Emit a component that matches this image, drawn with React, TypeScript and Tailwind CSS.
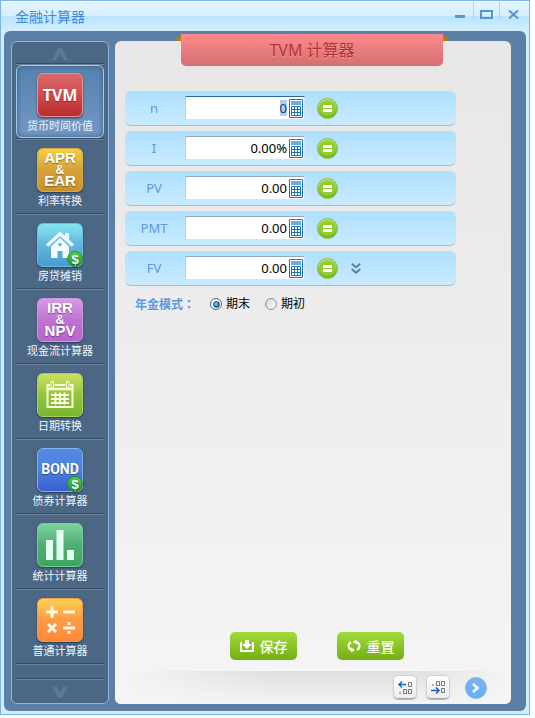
import { useEffect, useRef, useState, type ReactNode } from "react";

function CoinBadge() {
  return (
    <span className="absolute -right-px -bottom-px flex h-4 w-4 items-center justify-center rounded-full border border-[#259a2a] bg-linear-to-b from-[#59c94a] to-[#17941d] font-['Liberation_Sans',sans-serif] text-[13px] leading-none font-bold text-white">
      $
    </span>
  );
}

function HouseIcon() {
  return (
    <svg width="30" height="30" viewBox="0 0 30 30" fill="#f1fbff">
      <path d="M1 14.500 15 1.500l5 4.600V3h4v6.800l5 4.700-2.200 2.200L15 6 3.200 16.700z" />
      <path d="M15 8 6 16.500V28h6.500v-7h5v7H24V16.500zM13.500 13h3v3h-3z" fillRule="evenodd" />
    </svg>
  );
}

function CalendarIcon() {
  return (
    <svg width="28" height="28" viewBox="0 0 28 28" fill="none" stroke="#fdfee0">
      <path d="M4 4H1.500v22h25V4H24M8.500 4h11" strokeWidth="2" />
      <path d="M1 8h26" strokeWidth="2.500" />
      <path d="M5 .5h2.500v6H5zM20.500.5H23v6h-2.500z" strokeWidth="1" />
      <path d="M5 14h18M5 18h18M5 22h18M9.500 11.500v12M14 11.500v12M18.500 11.500v12" strokeWidth="1.800" />
    </svg>
  );
}

function BarsIcon() {
  return (
    <svg width="28" height="32" viewBox="0 0 28 32" fill="#e4fff0">
      <path d="M0 11h7v20H0zM10.500 1h7v30h-7zM21 21h7v10h-7z" />
    </svg>
  );
}

function OperatorsIcon() {
  return (
    <svg width="32" height="32" viewBox="0 0 32 32" stroke="#fff7e6" strokeWidth="3" fill="none">
      <path d="M2 8h12M8 2v12M19 8h12M4 20l8 8M12 20l-8 8M19 24h12M25 18v3M25 27v3" />
    </svg>
  );
}

function StackedText({ top, bottom }: { top: string; bottom: string }) {
  return (
    <span className="flex flex-col pb-px text-[15px] leading-[12px] font-bold">
      <span>{top}</span>
      <span className="text-[13px] leading-[11px]">&amp;</span>
      <span>{bottom}</span>
    </span>
  );
}

interface Tool {
  name: string;
  tile: string;
  art: ReactNode;
  badge?: boolean;
}

const tools: Tool[] = [
  {
    name: "货币时间价值",
    tile: "border-[#ec9294] from-[#d8696b] via-[#cf4a4d] to-[#b92c30]",
    art: <span className="font-['Open_Sans',sans-serif] text-[16px] font-bold">TVM</span>,
  },
  {
    name: "利率转换",
    tile: "border-[#d9ab45] from-[#f5d13c] via-[#d7a03b] to-[#cc912a]",
    art: <StackedText top="APR" bottom="EAR" />,
  },
  {
    name: "房贷摊销",
    tile: "border-[#65bddf] from-[#83e6ef] via-[#63b6dd] to-[#459bd0]",
    art: <HouseIcon />,
    badge: true,
  },
  {
    name: "现金流计算器",
    tile: "border-[#cf9ae1] from-[#d69be6] via-[#be72d2] to-[#b866cb]",
    art: <StackedText top="IRR" bottom="NPV" />,
  },
  {
    name: "日期转换",
    tile: "border-[#a8ce55] from-[#cbe05f] via-[#92c63e] to-[#79b52f]",
    art: <CalendarIcon />,
  },
  {
    name: "债券计算器",
    tile: "border-[#82aff0] from-[#5589e2] via-[#4b80dd] to-[#3c5dce]",
    art: <span className="pb-[2px] font-['Roboto',sans-serif] text-[14px] font-bold">BOND</span>,
    badge: true,
  },
  {
    name: "统计计算器",
    tile: "border-[#79ce98] from-[#7cd59d] via-[#51ad75] to-[#3da560]",
    art: <BarsIcon />,
  },
  {
    name: "普通计算器",
    tile: "border-[#ed9a4c] from-[#ffd04e] via-[#ff9a45] to-[#ff8a38]",
    art: <OperatorsIcon />,
  },
];

function Sidebar() {
  const [active, setActive] = useState(0);
  return (
    <nav aria-label="计算器" className="flex w-[98px] shrink-0 flex-col rounded-md border border-[#8db5e5] bg-[#4b6784] px-1">
      <button aria-label="向上" className="flex h-[23px] items-center justify-center border-b border-[#6c8398] pt-[2px] shadow-[inset_0_-1px_0_#344b62]">
        <svg width="16" height="12" viewBox="0 0 16 12" fill="#5d7892">
          <path d="M0 12 6 0h4l6 12h-4L8 6l-4 6z" />
        </svg>
      </button>
      {tools.map((tool, i) => (
        <div key={tool.name} className="h-[75px] border-b border-[#6c8398] shadow-[inset_0_-1px_0_#344b62]">
          <button
            onClick={() => setActive(i)}
            className={
              "flex h-[73px] w-full flex-col items-center rounded-md border pt-[7px] " +
              (i === active
                ? "border-[#a5c9ed] bg-linear-to-b from-[#5681af] to-[#7398c3] shadow-[inset_0_0_5px_#365b84]"
                : "border-transparent")
            }
          >
            <span className={"relative flex h-11 w-[46px] shrink-0 items-center justify-center rounded-md border bg-linear-to-b text-center font-['Liberation_Sans',sans-serif] text-white shadow-[0_1px_2px_#273d55] text-shadow-[0_1px_1px_#0006] " + tool.tile}>
              {tool.art}
              {tool.badge && <CoinBadge />}
            </span>
            <span className="text-[11px] leading-[18px] whitespace-nowrap text-[#eef6ff]">{tool.name}</span>
          </button>
        </div>
      ))}
      <div className="h-[15px] border-b border-[#6c8398] shadow-[inset_0_-1px_0_#344b62]" />
      <button aria-label="向下" className="flex grow items-center justify-center">
        <svg width="16" height="12" viewBox="0 0 16 12" fill="#5d7892">
          <path d="M0 0 6 12h4l6-12h-4L8 6 4 0z" />
        </svg>
      </button>
    </nav>
  );
}

function KeypadIcon() {
  return (
    <svg width="14" height="19" viewBox="0 0 14 19">
      <path d="M.5.5h13v18H.5z" fill="#fff" stroke="#1c78bd" />
      <path d="M2 2h10v4H2z" fill="#69ade3" />
      <path d="M2.500 7.500h9v9h-9zM5.500 7.500v9M8.500 7.500v9M2 10.500h10M2 13.500h10" fill="none" stroke="#1c78bd" />
    </svg>
  );
}

function ValueRow({ id, value, selected, more }: { id: string; value: string; selected?: boolean; more?: boolean }) {
  const field = useRef<HTMLInputElement>(null);
  useEffect(() => {
    if (selected && field.current) {
      field.current.focus();
      field.current.select();
    }
  }, [selected]);
  return (
    <div className="flex h-[35px] items-center rounded-md border-b border-[#a9bccb] bg-linear-to-b from-[#ade0ff] to-[#caebff]">
      <label htmlFor={id} className="w-[60px] shrink-0 pt-[2px] pr-[2px] text-center text-[13px] text-[#5c98dc]">{id}</label>
      <div className={"flex h-6 w-[120px] shrink-0 items-center border border-r-[#d5e4ee] border-b-[#d5e4ee] border-l-[#b5cfe0] bg-white pr-px " + (selected ? "border-t-[#2f6a9e]" : "border-t-[#94aabb]")}>
        <input
          id={id}
          ref={field}
          defaultValue={value}
          className="w-full min-w-0 grow bg-transparent pr-[2px] text-right text-[13px] leading-4 text-black caret-transparent outline-none selection:bg-[#a8d1fb] selection:text-[#243a55]"
        />
        <button aria-label={id + " 键盘"} className="shrink-0"><KeypadIcon /></button>
      </div>
      <button
        aria-label={"计算 " + id}
        className="ml-3 flex h-[21px] w-[21px] shrink-0 items-center justify-center rounded-full border border-[#8cba47] bg-[#8fce2c] shadow-[inset_0_1px_1px_#d7f29a,inset_0_-2px_1px_#75b51b]"
      >
        <svg width="9" height="7" viewBox="0 0 9 7" fill="#fff">
          <path d="M0 0h9v3H0zM0 4h9v3H0z" />
        </svg>
      </button>
      {more && (
        <button aria-label="更多" className="ml-[13px]">
          <svg width="10" height="11" viewBox="0 0 10 11" fill="none" stroke="#527da9" strokeWidth="1.800">
            <path d="m.7.700 4.300 3.600L9.300.700M.7 6l4.300 3.700L9.300 6" />
          </svg>
        </button>
      )}
    </div>
  );
}

function Mode({ label, checked }: { label: string; checked?: boolean }) {
  return (
    <label className="flex items-center gap-1 text-[12px] text-black">
      <input
        type="radio"
        name="mode"
        defaultChecked={checked}
        className="flex h-3 w-3 appearance-none items-center justify-center rounded-full border border-[#8c8f92] bg-linear-to-br from-[#d2d4d6] to-white before:hidden before:h-[7px] before:w-[7px] before:rounded-full before:border before:border-[#174766] before:bg-[radial-gradient(circle_at_40%_40%,#8bdcf5,#1c7ba8_60%)] checked:border-[#4c6478] checked:from-white checked:before:block"
      />
      {label}
    </label>
  );
}

const actionClass =
  "flex h-7 w-[67px] items-center justify-center gap-[6px] rounded-[5px] bg-linear-to-b from-[#a0db39] to-[#74ae12] text-[14px] font-medium text-white";

const padClass =
  "flex h-6 w-6 items-center justify-center rounded-[5px] border border-[#d0d0d0] border-b-[#a6a6a6] bg-linear-to-b from-white to-[#ececec] shadow-[0_1px_1px_#8888]";

export default function App() {
  return (
    <div className="flex min-h-screen bg-white pr-[5px] pb-[3px] font-['Noto_Sans','Noto_Sans_CJK_SC',sans-serif]">
      <div className="flex grow flex-col border border-[#7db4e8] bg-[#d3eeff] px-[3px] pb-[3px]">
        <header className="-mx-[3px] flex h-[30px] shrink-0 items-start justify-between border-t border-white bg-[linear-gradient(#e4f4ff,#d5efff_50%,#b9e5ff_50%,#d3eeff)] pr-[3px] pl-[14px]">
          <h1 className="text-[14px] leading-[29px] text-[#4289da]">金融计算器</h1>
          <div className="flex h-[18px] text-[#5795cd]">
            <button aria-label="最小化" className="flex w-7 justify-center border-r border-[#b4d3ea] pt-[13px]">
              <svg width="10" height="3" viewBox="0 0 10 3" fill="currentColor"><path d="M0 0h10v3H0z" /></svg>
            </button>
            <button aria-label="最大化" className="flex w-[26px] justify-center border-r border-[#b4d3ea] pt-2">
              <svg width="13" height="9" viewBox="0 0 13 9" fill="none" stroke="currentColor" strokeWidth="2"><path d="M1 1h11v7H1z" /></svg>
            </button>
            <button aria-label="关闭" className="flex w-[26px] justify-center pt-2">
              <svg width="11" height="9" viewBox="0 0 11 9" fill="none" stroke="currentColor" strokeWidth="2"><path d="m1 .5 9 8M10 .5l-9 8" /></svg>
            </button>
          </div>
        </header>

        <div className="flex grow gap-[6px] rounded-md bg-[#5c7fa6] pt-[10px] pr-[15px] pb-[7px] pl-[7px]">
          <Sidebar />
          <main className="relative flex grow flex-col rounded-md bg-linear-to-b from-[#e8e6e7] to-[#f5f5f5]">
            <div className="absolute -top-[7px] right-[62px] left-[60px] flex">
              <svg className="shrink-0" width="6" height="7" viewBox="0 0 6 7" fill="#b47e12"><path d="M6 0v7H0z" /></svg>
              <h2 className="h-8 grow rounded-b-[5px] bg-linear-to-b from-[#ff8b8c] to-[#d46f71] text-center text-[16px] leading-8 text-[#b63134] text-shadow-[0_1px_0_#ef9b9c]">
                TVM 计算器
              </h2>
              <svg className="shrink-0" width="6" height="7" viewBox="0 0 6 7" fill="#b47e12"><path d="M0 0v7h6z" /></svg>
            </div>

            <form className="flex grow flex-col pt-[50px]" onSubmit={(e) => e.preventDefault()}>
              <div className="mr-[55px] ml-[10px] flex flex-col gap-[5px]">
                <ValueRow id="n" value="0" selected />
                <ValueRow id="I" value="0.00%" />
                <ValueRow id="PV" value="0.00" />
                <ValueRow id="PMT" value="0.00" />
                <ValueRow id="FV" value="0.00" more />
              </div>

              <div role="radiogroup" aria-labelledby="mode-title" className="mt-2 ml-5 flex h-5 items-center">
                <span id="mode-title" className="w-[75px] text-[12px] font-bold text-[#5c98dc]">
                  年金模式<span className="font-['Noto_Sans_CJK_TC',sans-serif]">：</span>
                </span>
                <div className="flex gap-[15px]">
                  <Mode label="期末" checked />
                  <Mode label="期初" />
                </div>
              </div>

              <div className="mt-auto mb-[11px] flex justify-center gap-10 pl-2">
                <button type="submit" className={actionClass}>
                  <svg width="14" height="12" viewBox="0 0 14 12" fill="#fff">
                    <path d="M0 2h2v8h10V2h2v10H0zM5 0h4v4h3L7 9 2 4h3z" />
                  </svg>
                  保存
                </button>
                <button type="reset" className={actionClass}>
                  <svg width="14" height="14" viewBox="0 0 16 15" fill="none" stroke="#fff" strokeWidth="2.500">
                    <path d="M4.500 3C.5 5.500 1 10 4.500 12M11.500 12c4-2.500 3.500-7.500-.5-9" />
                    <path d="M4 8.500 9 12l-4 3zM12 6 6.500 3 11 0z" fill="#fff" stroke="none" />
                  </svg>
                  重置
                </button>
              </div>
            </form>

            <footer className="flex h-[33px] shrink-0 items-start justify-end rounded-b-md bg-[linear-gradient(to_right,#f5f5f5_0,transparent_40%,transparent_75%,#f5f5f5_100%),linear-gradient(#dfdfdf,#f4f4f4)] pt-1 pr-6">
              <button aria-label="减少小数位" className={padClass + " mr-[9px]"}>
                <svg width="14" height="13" viewBox="0 0 14 13" fill="none" className="shrink-0">
                  <path d="M1 3.500h7M4 .5l-3 3 3 3" stroke="#1762c7" strokeWidth="1.500" />
                  <path d="M10.500 1.500h3v4h-3zM5.500 8.500h3v4h-3zM10.500 8.500h3v4h-3zM1 12h2" stroke="#777" />
                </svg>
              </button>
              <button aria-label="增加小数位" className={padClass + " mr-[15px]"}>
                <svg width="14" height="13" viewBox="0 0 14 13" fill="none" className="shrink-0">
                  <path d="M0 9.500h8M5 6.500l3 3-3 3" stroke="#1762c7" strokeWidth="1.500" />
                  <path d="M5.500.5h3v4h-3zM10.500.5h3v4h-3zM10.500 7.500h3v4h-3zM1 4h2" stroke="#777" />
                </svg>
              </button>
              <button aria-label="下一页" className="mt-[2px] flex h-[22px] w-[22px] items-center justify-center rounded-full border border-[#8cb3dd] bg-linear-to-b from-[#7eb0ed] to-[#61b0fa]">
                <svg width="8" height="10" viewBox="0 0 8 10" fill="none" stroke="#fff" strokeWidth="2.600"><path d="m1 1 4.500 4L1 9" /></svg>
              </button>
            </footer>
          </main>
        </div>
      </div>
    </div>
  );
}
